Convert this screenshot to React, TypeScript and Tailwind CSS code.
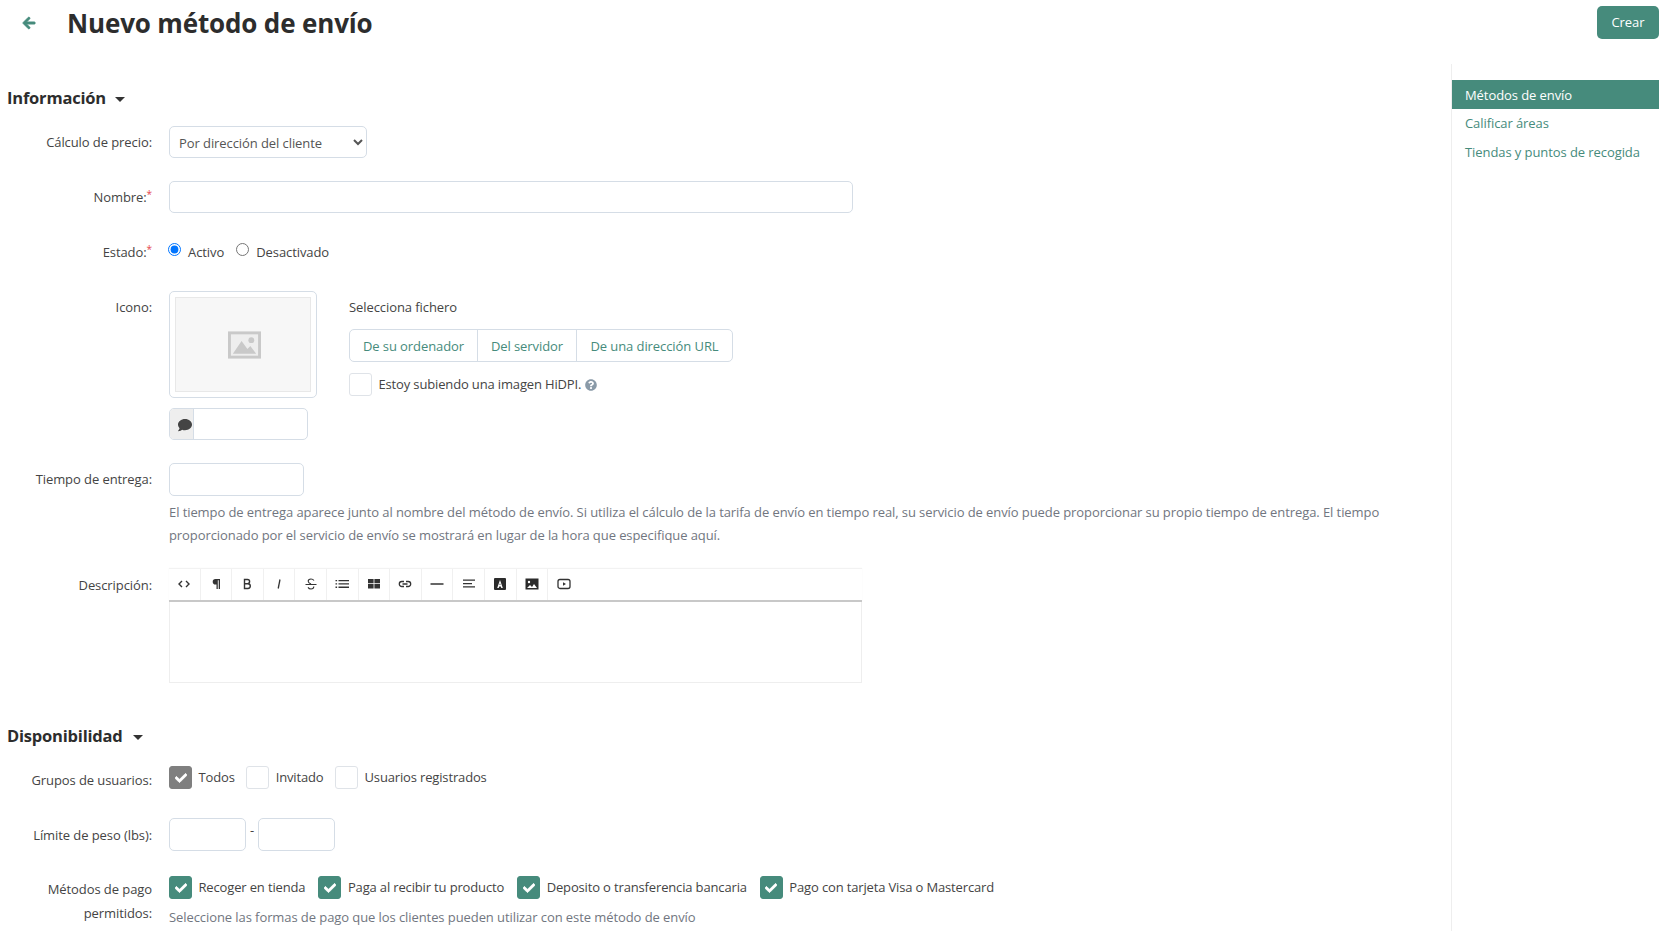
import React from "react";
import { FaArrowLeft, FaCheck, FaComment, FaQuestionCircle } from "react-icons/fa";

function Row({ label, required, children, className }: { label: React.ReactNode; required?: boolean; children: React.ReactNode; className?: string }) {
  return (
    <div className={"flex items-start " + (className ?? "")}>
      <div className="w-[145px] h-[33px] shrink-0 text-right leading-[33px] text-[#444]">
        {label}
        {required && <span className="text-[#e5484d] text-[10px] leading-none relative top-[-4px]">*</span>}
      </div>
      <div className="ml-[17px] flex-1 min-w-0">{children}</div>
    </div>
  );
}

function Check({ label, tone }: { label?: string; tone?: "teal" | "gray" }) {
  const box =
    tone === "teal"
      ? "bg-[#468b7c] border-[#468b7c]"
      : tone === "gray"
        ? "bg-[#7f7f7f] border-[#7f7f7f]"
        : "bg-white border-[#dfe3e8]";
  return (
    <div className="flex items-center">
      <span className={"w-[23px] h-[23px] rounded-[3px] border flex items-center justify-center shrink-0 " + box}>
        {tone && <FaCheck className="text-white text-[12px] stroke-white stroke-[30px]" />}
      </span>
      {label && <span className="ml-[6.5px] text-[#444] tracking-[-0.15px] whitespace-nowrap">{label}</span>}
    </div>
  );
}

const toolbarIcons: React.ReactNode[] = [
  <path key="code" d="M6 5 3 8l3 3M10 5l3 3-3 3" fill="none" stroke="#333" strokeWidth="1.4" />,
  <path key="para" d="M12 3H7.500a2.800 2.800 0 0 0 0 5.600H8.500V13h1.300V4.200h.9V13H12V3Z" fill="#333" />,
  <path key="bold" d="M5.500 3.500h3a2 2 0 0 1 0 4.200h-3Zm0 4.200h3.400a2.300 2.300 0 0 1 0 4.800H5.500Z" fill="none" stroke="#333" strokeWidth="1.400" />,
  <path key="italic" d="M9 3.500 7.200 12.500" fill="none" stroke="#333" strokeWidth="1.300" />,
  <path key="strike" d="M11 4.500C10.300 3.500 9.200 3 8 3 6.300 3 5.200 4 5.200 5.200c0 1.200 1 2 2.800 2.800M2.500 8.500h11M10.800 10.500c0 1.500-1.200 2.500-2.800 2.500-1.300 0-2.400-.6-3-1.600" fill="none" stroke="#333" strokeWidth="1.100" />,
  <path key="list" d="M1.500 4h1.600v1.300H1.500Zm3 0H15v1.300H4.500Zm-3 3.300h1.600v1.300H1.500Zm3 0H15v1.300H4.500Zm-3 3.300h1.600v1.300H1.500Zm3 0H15v1.300H4.500Z" fill="#333" />,
  <path key="table" d="M2 3h5.600v4.200H2Zm6.400 0H14v4.200H8.400Zm-6.400 5h5.600v4.400H2Zm6.400 0H14v4.400H8.400Z" fill="#333" />,
  <path key="link" d="M7 5.500H4.800a2.500 2.500 0 0 0 0 5H7M9 5.500h2.200a2.500 2.500 0 0 1 0 5H9M5.500 8h5" fill="none" stroke="#333" strokeWidth="1.300" />,
  <path key="line" d="M1.500 8h13" fill="none" stroke="#333" strokeWidth="1.500" />,
  <path key="align" d="M2 3.500h12v1.300H2Zm0 3.400h9v1.300H2Zm0 3.400h12v1.300H2Z" fill="#333" />,
  <g key="color">
    <rect x="2" y="2" width="12" height="12" rx="1" fill="#2b2b2b" />
    <path d="M8 4 5.200 12h1.500l.5-1.600h1.600l.5 1.600h1.500L8 4Zm-.5 5L8 7l.5 2Z" fill="#fff" />
  </g>,
  <g key="image">
    <rect x="1.500" y="2.500" width="13" height="11" fill="#2b2b2b" />
    <circle cx="5" cy="6" r="1.200" fill="#fff" />
    <path d="m3 12 3-3 2 2 2-3 3 4Z" fill="#fff" />
  </g>,
  <g key="video">
    <rect x="2" y="3.500" width="12" height="9" rx="2" fill="none" stroke="#333" strokeWidth="1.300" />
    <path d="M7 6.200 10 8l-3 1.800Z" fill="#333" />
  </g>,
];

export default function App() {
  const inputCls = "bg-white border border-[#d5dde6] rounded-[5px] block";

  return (
    <div className="w-[1662px] h-[931px] overflow-hidden bg-white pr-[3px] font-['Open_Sans',sans-serif] text-[13px] text-[#333] tracking-[-0.08px]">
      {/* Header */}
      <div className="h-[64px] flex items-start">
        <FaArrowLeft className="text-[#468b7c] text-[14px] ml-[22px] mt-[16px] stroke-[#468b7c] stroke-[30px]" />
        <h1 className="ml-[31px] mt-[5px] text-[26px] leading-[36px] font-bold text-[#2d2d2d] tracking-[-0.15px]">Nuevo método de envío</h1>
        <button className="ml-auto mt-[6px] w-[62px] h-[33px] rounded-[5px] bg-[#468b7c] text-white">Crear</button>
      </div>

      <div className="flex h-[867px]">
        {/* Form */}
        <div className="flex-1 min-w-0 pl-[7px]">
          <h2 className="mt-[22px] h-[24px] leading-[24px] text-[16.5px] font-bold text-[#2d2d2d] tracking-[-0.2px] flex items-center">
            Información
            <span className="ml-[9px] mt-[2px] border-x-[5px] border-x-transparent border-t-[5px] border-t-[#333]" />
          </h2>

          <Row label="Cálculo de precio:" className="mt-[16px]">
            <select className="w-[198px] h-[32px] pl-[5px] pt-[2px] bg-white border border-[#d5dde6] rounded-[5px] text-[#555]">
              <option>Por dirección del cliente</option>
            </select>
          </Row>

          <Row label="Nombre:" required className="mt-[22px]">
            <input className={inputCls + " h-[32px] w-[684px]"} />
          </Row>

          <Row label="Estado:" required className="mt-[22px]">
            <div className="flex items-center h-[33px] text-[#444]">
              <input type="radio" name="estado" defaultChecked className="m-0 -ml-[1px] w-[13px] h-[13px] mb-[7px]" />
              <span className="ml-[7px]">Activo</span>
              <input type="radio" name="estado" className="m-0 ml-[12px] w-[13px] h-[13px] mb-[7px]" />
              <span className="ml-[7px]">Desactivado</span>
            </div>
          </Row>

          <Row label="Icono:" className="mt-[22px]">
            <div className="flex items-start">
              <div className="w-[148px]">
                <div className="h-[107px] border border-[#d5dde6] rounded-[5px] p-[5px]">
                  <div className="h-full bg-[#f7f7f7] border border-[#e8e8e8] flex items-center justify-center">
                    <svg viewBox="0 0 34 28" className="ml-[3px] w-[33px] h-[28px]">
                      <rect width="34" height="28" fill="#c9c9c9" />
                      <rect x="3" y="3" width="28" height="22" fill="#eeeeee" />
                      <circle cx="24" cy="9" r="3" fill="#c9c9c9" />
                      <path d="M5 23 14 10l6 8 3-3 6 8Z" fill="#c9c9c9" />
                    </svg>
                  </div>
                </div>
                <div className="mt-[10px] w-[139px] h-[32px] border border-[#d5dde6] rounded-[5px] flex overflow-hidden">
                  <span className="w-[24px] bg-[#eeeeee] border-r border-[#d5dde6] flex items-center justify-center pt-[2px]">
                    <FaComment className="ml-[6px] text-[#444] text-[14px]" />
                  </span>
                </div>
              </div>
              <div className="ml-[32px] text-[#444]">
                <div className="leading-[33px]">Selecciona fichero</div>
                <div className="mt-[5px] inline-flex h-[33px] border border-[#d5dde6] rounded-[5px] text-[#468b7c] leading-[33px]">
                  <span className="w-[127px] text-center whitespace-nowrap">De su ordenador</span>
                  <span className="w-[99px] border-l border-[#d5dde6] text-center whitespace-nowrap">Del servidor</span>
                  <span className="w-[156px] border-l border-[#d5dde6] text-center whitespace-nowrap">De una dirección URL</span>
                </div>
                <div className="mt-[11px] flex items-center">
                  <Check label="Estoy subiendo una imagen HiDPI." />
                  <FaQuestionCircle className="ml-[4px] text-[#8a9aa8] text-[12px]" />
                </div>
              </div>
            </div>
          </Row>

          <Row label="Tiempo de entrega:" className="mt-[23px]">
            <input className={inputCls + " h-[33px] w-[135px]"} />
            <p className="mt-[5px] w-[1240px] text-[13px] leading-[23px] text-[#717680]">
              El tiempo de entrega aparece junto al nombre del método de envío. Si utiliza el cálculo de la tarifa de envío en tiempo real, su servicio de envío puede proporcionar su propio tiempo de entrega. El tiempo proporcionado por el servicio de envío se mostrará en lugar de la hora que especifique aquí.
            </p>
          </Row>

          <Row label="Descripción:" className="mt-[22px]">
            <div className="w-[693px]">
              <div className="h-[33px] flex border-b-2 border-[#c8c8c8] shadow-[0_-1px_1px_#f2f2f2]">
                {toolbarIcons.map((icon, i) => (
                  <span key={i} className="w-[31.6px] h-full pb-[2px] border-r border-[#f0f0f0] flex items-center justify-center last:border-r-0">
                    <svg viewBox="0 0 16 16" className="w-[16px] h-[16px]">{icon}</svg>
                  </span>
                ))}
              </div>
              <div className="h-[81px] border-x border-b border-[#eeeeee]" />
            </div>
          </Row>

          <h2 className="mt-[41px] h-[24px] leading-[24px] text-[16.5px] font-bold text-[#2d2d2d] tracking-[-0.2px] flex items-center">
            Disponibilidad
            <span className="ml-[10px] mt-[2px] border-x-[5px] border-x-transparent border-t-[5px] border-t-[#333]" />
          </h2>

          <Row label={<span className="block pt-[1px]">Grupos de usuarios:</span>} className="mt-[15px]">
            <div className="flex items-center gap-[11.5px] h-[29px]">
              <Check label="Todos" tone="gray" />
              <Check label="Invitado" />
              <Check label="Usuarios registrados" />
            </div>
          </Row>

          <Row label={<span className="block pt-[1px]">Límite de peso (lbs):</span>} className="mt-[22px]">
            <div className="flex items-start">
              <input className={inputCls + " h-[33px] w-[77px]"} />
              <span className="w-[12px] text-center leading-[24px] text-[#444]">-</span>
              <input className={inputCls + " h-[33px] w-[77px]"} />
            </div>
          </Row>

          <Row
            label={
              <span className="block pt-[2px] leading-[23.5px]">
                Métodos de pago
                <br />
                permitidos:
              </span>
            }
            className="mt-[25px]"
          >
            <div className="flex items-center gap-[13px]">
              <Check label="Recoger en tienda" tone="teal" />
              <Check label="Paga al recibir tu producto" tone="teal" />
              <Check label="Deposito o transferencia bancaria" tone="teal" />
              <Check label="Pago con tarjeta Visa o Mastercard" tone="teal" />
            </div>
            <p className="mt-[7px] leading-[23px] text-[#717680]">Seleccione las formas de pago que los clientes pueden utilizar con este método de envío</p>
          </Row>
        </div>

        {/* Sidebar */}
        <div className="w-[208px] shrink-0 border-l border-[#eeeeee] pt-[16px]">
          <div className="h-[29px] leading-[31px] pl-[13px] bg-[#468b7c] text-white">Métodos de envío</div>
          <div className="h-[29px] leading-[29px] pl-[13px] text-[#468b7c]">Calificar áreas</div>
          <div className="h-[29px] leading-[29px] pl-[13px] text-[#468b7c]">Tiendas y puntos de recogida</div>
        </div>
      </div>
    </div>
  );
}
